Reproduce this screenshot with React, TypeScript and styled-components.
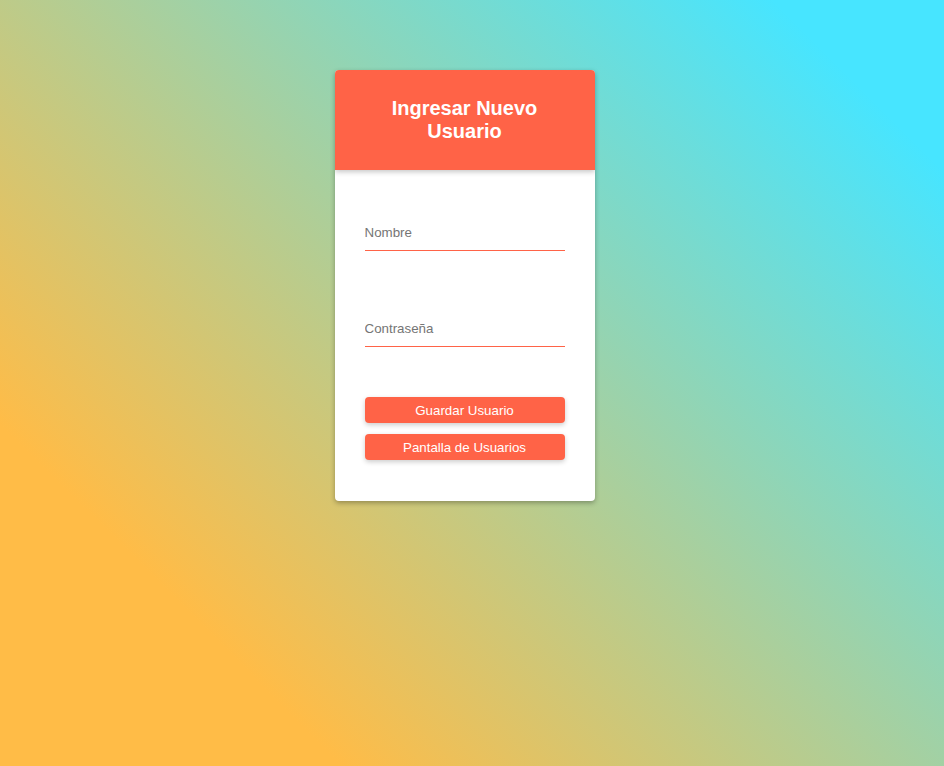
import React from "react";
import styled, { createGlobalStyle } from "styled-components";

const GlobalStyle = createGlobalStyle`
  html, body {
    margin: 0;
    padding: 0;
    height: 100%;
  }
  body {
    font-family: "Liberation Sans", Arial, sans-serif;
    background: linear-gradient(45deg, #ffbc47 20%, #47e5ff 90%);
    background-attachment: fixed;
    min-height: 100vh;
  }
  * { box-sizing: border-box; }
`;

const Page = styled.div`
  min-height: 100vh;
  display: flex;
  justify-content: center;
  align-items: flex-start;
  padding: 70px 15px 0 0;
`;

const Card = styled.div`
  width: 260px;
  background: #ffffff;
  border-radius: 4px;
  box-shadow: 0 2px 5px rgba(0, 0, 0, 0.3);
  overflow: hidden;
  display: flex;
  flex-direction: column;
`;

const Header = styled.div`
  position: relative;
  z-index: 1;
  height: 100px;
  background: #ff6347;
  display: flex;
  align-items: center;
  justify-content: center;
  padding: 0 30px;
  box-shadow: 0 2px 5px rgba(0, 0, 0, 0.22);
`;

const Title = styled.h2`
  margin: 0;
  color: #ffffff;
  font-size: 20px;
  font-weight: bold;
  line-height: 23px;
  text-align: center;
`;

const Body = styled.form`
  display: flex;
  flex-direction: column;
  padding: 45px 30px 41px;
`;

const Field = styled.input<{ $gap?: number }>`
  display: block;
  width: 100%;
  height: 36px;
  margin: 0 0 ${(p) => p.$gap ?? 0}px;
  padding: 0;
  border: 0 solid transparent;
  border-bottom: 1px solid #ff6347;
  border-radius: 0;
  outline: none;
  background: transparent;
  font-family: "Liberation Sans", Arial, sans-serif;
  font-size: 13.333px;
  color: #333;
  &::placeholder {
    color: #757575;
  }
`;

const Button = styled.button<{ $gap?: number }>`
  display: block;
  width: 100%;
  height: 26px;
  margin: 0 0 ${(p) => p.$gap ?? 0}px;
  border: none;
  border-radius: 4px;
  background: #ff6347;
  color: #ffffff;
  font-family: "Liberation Sans", Arial, sans-serif;
  font-size: 13.333px;
  cursor: pointer;
  box-shadow: 0 2px 5px rgba(0, 0, 0, 0.2);
`;

export default function App() {
  return (
    <>
      <GlobalStyle />
      <Page>
        <Card>
          <Header>
            <Title>Ingresar Nuevo Usuario</Title>
          </Header>
          <Body onSubmit={(e) => e.preventDefault()}>
            <Field type="text" placeholder="Nombre" $gap={60} />
            <Field type="password" placeholder="Contraseña" $gap={50} />
            <Button type="submit" $gap={11}>Guardar Usuario</Button>
            <Button type="button">Pantalla de Usuarios</Button>
          </Body>
        </Card>
      </Page>
    </>
  );
}
